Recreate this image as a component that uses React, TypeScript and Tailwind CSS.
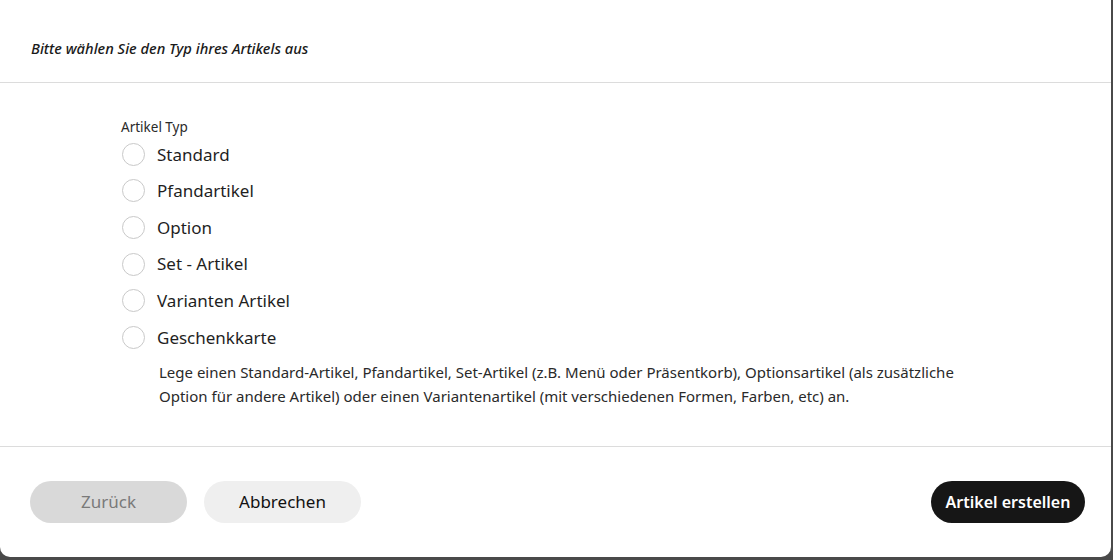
const types = ["Standard", "Pfandartikel", "Option", "Set - Artikel", "Varianten Artikel", "Geschenkkarte"];

function Radio({ label }: { label: string }) {
    return (
        <label className="flex h-[36.6px] items-center gap-[12px] cursor-pointer">
            <span className="ml-[1px] h-[23px] w-[23px] rounded-full border-[1.5px] border-[#c9c9c9] bg-white" />
            <span className="text-[17px] text-[#1f1f1f]">{label}</span>
        </label>
    );
}

export default function App() {
    return (
        <div className="h-[560px] w-[1113px] bg-[#4a4a4a] overflow-hidden" style={{ fontFamily: '"Noto Sans", "Open Sans", sans-serif' }}>
            <div className="flex h-[557px] w-[1111px] flex-col rounded-b-[10px] bg-white">
                <div className="flex h-[83px] items-center border-b border-[#dcdcdc] pl-[31px] pt-[14px]">
                    <h2 className="text-[14.7px] font-medium italic text-[#1a1a1a]">Bitte wählen Sie den Typ ihres Artikels aus</h2>
                </div>

                <div className="border-b border-[#dcdcdc] pl-[121px] pt-[35px] pb-[38px]">
                    <div className="text-[13.5px] leading-[18px] text-[#2a2a2a]">Artikel Typ</div>
                    <div className="flex flex-col">
                        {types.map((t) => (
                            <Radio key={t} label={t} />
                        ))}
                    </div>
                    <p className="mt-[4px] ml-[38px] w-[800px] text-[15px] leading-[24px] text-[#2a2a2a]">
                        Lege einen Standard-Artikel, Pfandartikel, Set-Artikel (z.B. Menü oder Präsentkorb), Optionsartikel (als zusätzliche Option für andere Artikel) oder einen Variantenartikel (mit verschiedenen Formen, Farben, etc) an.
                    </p>
                </div>

                <div className="flex flex-1 items-center pl-[30px] pr-[26px]">
                    <div className="flex gap-[17px]">
                        <button className="h-[42px] w-[157px] rounded-full bg-[#d9d9d9] text-[17px] text-[#7a7a7a]">Zurück</button>
                        <button className="h-[42px] w-[157px] rounded-full bg-[#efefef] text-[17px] text-[#111]">Abbrechen</button>
                    </div>
                    <button className="ml-auto h-[42px] w-[154px] rounded-full bg-[#161616] text-[16px] font-semibold text-white">Artikel erstellen</button>
                </div>
            </div>
        </div>
    );
}
